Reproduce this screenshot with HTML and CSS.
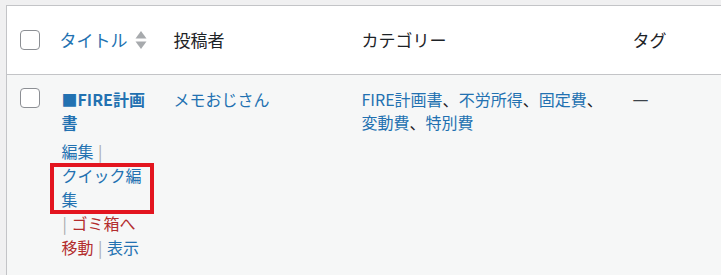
FILE: index.html
```html
<!DOCTYPE html>
<html lang="ja">
<head>
<meta charset="utf-8">
<link rel="stylesheet" href="styles.css">
</head>
<body>
<div class="wrap">
  <table class="posts">
    <colgroup>
      <col class="c-check"><col class="c-title"><col class="c-author"><col class="c-cat"><col class="c-tag">
    </colgroup>
    <thead>
      <tr>
        <td class="check"><input type="checkbox" class="cb"></td>
        <th class="th-title"><a href="#" class="sort">タイトル<svg class="arrows" width="12" height="20" viewBox="0 0 12 20"><path d="M6 1 L11.5 8.5 H0.5 Z" fill="#a7aaad"/><path d="M6 19 L11.5 11.5 H0.5 Z" fill="#a7aaad"/></svg></a></th>
        <th>投稿者</th>
        <th>カテゴリー</th>
        <th>タグ</th>
      </tr>
    </thead>
    <tbody>
      <tr>
        <td class="check"><input type="checkbox" class="cb"></td>
        <td class="title-cell">
          <a href="#" class="post-title">■FIRE計画書</a>
          <div class="row-actions"><a href="#">編集</a> <span class="sep">|</span> <button class="quick">クイック編集</button> <span class="sep">|</span> <a href="#" class="trash">ゴミ箱へ移動</a> <span class="sep">|</span> <a href="#">表示</a></div>
        </td>
        <td class="text-cell"><a href="#">メモおじさん</a></td>
        <td class="text-cell"><a href="#">FIRE計画書</a>、<a href="#">不労所得</a>、<a href="#">固定費</a>、<a href="#">変動費</a>、<a href="#">特別費</a></td>
        <td class="text-cell dash">—</td>
      </tr>
    </tbody>
  </table>
</div>
</body>
</html>
```

FILE: styles.css
```css
html, body {
  margin: 0;
  padding: 0;
  background: #f0f0f1;
  font-family: "Noto Sans CJK JP", "Noto Sans", sans-serif;
  color: #1d2327;
  overflow: hidden;
}
.wrap {
  padding: 5px 0 0 6px;
  width: 780px;
}
.posts {
  border-collapse: collapse;
  table-layout: fixed;
  width: 774px;
  border: 1px solid #c3c4c7;
  border-right: none;
}
.c-check { width: 45px; }
.c-title { width: 112px; }
.c-author { width: 188px; }
.c-cat { width: 271px; }
.c-tag { width: 158px; }

thead tr {
  background: #fff;
  height: 69px;
  border-bottom: 1px solid #c3c4c7;
}
thead th {
  font-weight: 400;
  font-size: 17px;
  text-align: left;
  padding: 0 10px;
  vertical-align: middle;
  line-height: 24px;
}
thead th.th-title { padding-left: 8px; }
.sort {
  color: #2271b1;
  text-decoration: none;
  display: inline-flex;
  align-items: center;
  white-space: nowrap;
}
.arrows { margin-left: 7px; }

td.check {
  padding: 0 0 0 13px;
  vertical-align: middle;
}
tbody td.check {
  vertical-align: top;
  padding-top: 13px;
}
.cb {
  appearance: none;
  -webkit-appearance: none;
  width: 20px;
  height: 20px;
  margin: 0;
  border: 1px solid #8c8f94;
  border-radius: 4px;
  background: #fff;
  display: block;
}

tbody tr { background: #f6f7f7; height: 220px; }
tbody td {
  vertical-align: top;
  padding: 13px 10px 0;
}
.title-cell { padding-right: 16px; }
a { color: #2271b1; text-decoration: none; }
.post-title {
  font-weight: 700;
  font-size: 16px;
  line-height: 23px;
  display: block;
}
.row-actions {
  margin-top: 5px;
  font-size: 16px;
  line-height: 24px;
  color: #a7aaad;
}
.sep { color: #a7aaad; padding: 0 1px; }
.trash { color: #b32d2e; }
.quick {
  position: relative;
  font: inherit;
  color: #2271b1;
  background: none;
  border: none;
  padding: 0;
  margin: 0;
  text-align: left;
  line-height: 24px;
  cursor: pointer;
}
.quick::after {
  content: "";
  position: absolute;
  top: 0;
  bottom: -3px;
  left: -12px;
  right: -6px;
  border: 4px solid #e3151f;
}
.text-cell {
  font-size: 16px;
  line-height: 23px;
}
.dash {
  color: #3c434a;
  font-family: "DejaVu Sans", sans-serif;
}
```
